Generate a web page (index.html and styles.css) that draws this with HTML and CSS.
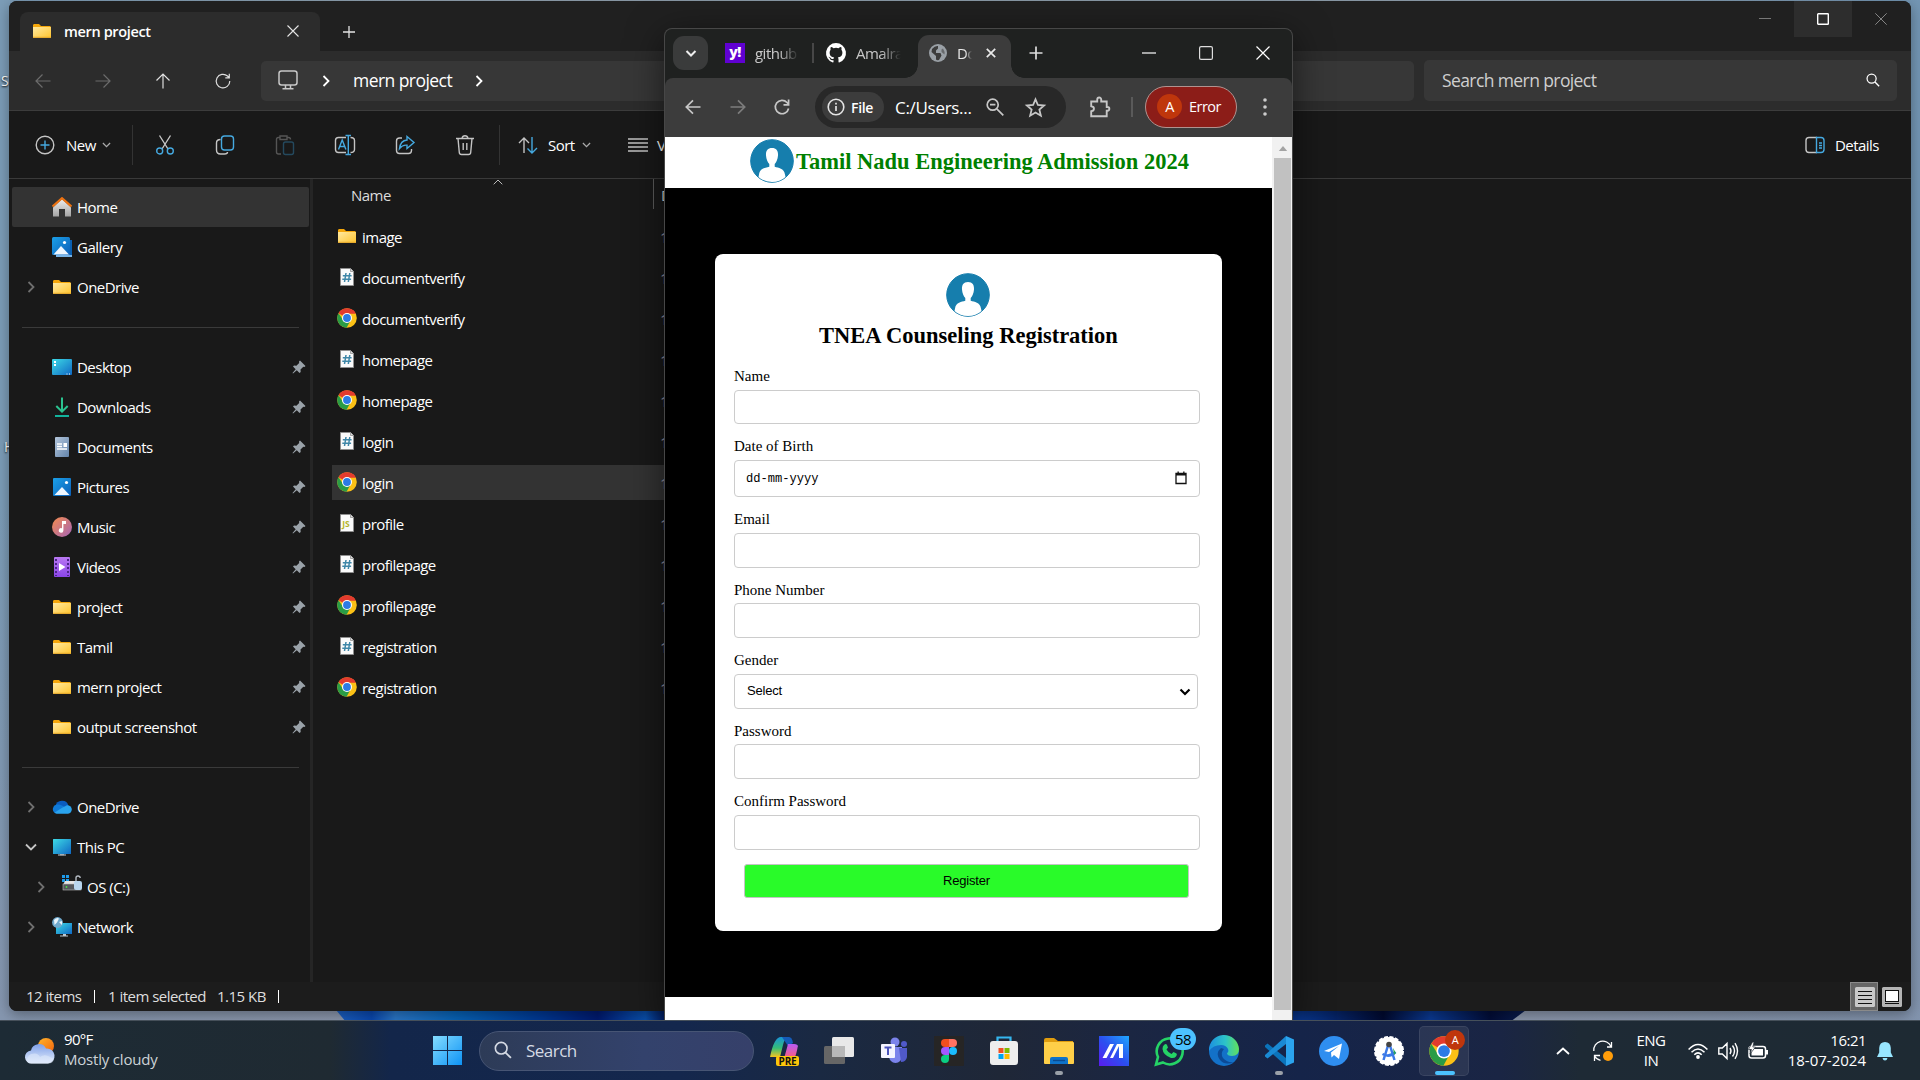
FILE: index.html
```html
<!DOCTYPE html>
<html lang="en">
<head>
<meta charset="utf-8">
<title>Desktop</title>
<link rel="stylesheet" href="styles.css">
</head>
<body>
<svg class="defs" width="0" height="0" aria-hidden="true">
<defs>
<linearGradient id="gFolder" x1="0" y1="0" x2="1" y2="1"><stop offset="0" stop-color="#ffe9a0"/><stop offset="1" stop-color="#ffc42e"/></linearGradient>
<linearGradient id="gBlue" x1="0" y1="0" x2="1" y2="1"><stop offset="0" stop-color="#1ba0e8"/><stop offset="1" stop-color="#0c5fb8"/></linearGradient>
<linearGradient id="gCyan" x1="0" y1="0" x2="1" y2="1"><stop offset="0" stop-color="#3ddbe6"/><stop offset="1" stop-color="#1068c4"/></linearGradient>
<linearGradient id="gMusic" x1="0" y1="0" x2="1" y2="1"><stop offset="0" stop-color="#f58b4c"/><stop offset="1" stop-color="#a565b8"/></linearGradient>
<linearGradient id="gDoc" x1="0" y1="0" x2="1" y2="1"><stop offset="0" stop-color="#b4c6dc"/><stop offset="1" stop-color="#6384ab"/></linearGradient>
<linearGradient id="gHouse" x1="0" y1="0" x2="0" y2="1"><stop offset="0" stop-color="#eee"/><stop offset="1" stop-color="#a4a4a4"/></linearGradient>
<linearGradient id="gVideo" x1="0" y1="0" x2="0" y2="1"><stop offset="0" stop-color="#b978f2"/><stop offset="1" stop-color="#8a45e8"/></linearGradient>
<linearGradient id="gWin" x1="0" y1="0" x2="1" y2="1"><stop offset="0" stop-color="#84dcff"/><stop offset="1" stop-color="#0e93f5"/></linearGradient>
<linearGradient id="gCloud" x1="0" y1="0" x2="0" y2="1"><stop offset="0" stop-color="#7fa0e8"/><stop offset="1" stop-color="#e6effc"/></linearGradient>
<linearGradient id="gSun" x1="0" y1="0" x2="1" y2="1"><stop offset="0" stop-color="#ffb52c"/><stop offset="1" stop-color="#f2620c"/></linearGradient>
<linearGradient id="gEdge" x1="0" y1="0" x2="1" y2="0"><stop offset="0" stop-color="#1d90e0"/><stop offset=".55" stop-color="#2cc3c8"/><stop offset="1" stop-color="#62e05a"/></linearGradient>
<linearGradient id="gM" x1="0" y1="1" x2="1" y2="0"><stop offset="0" stop-color="#5a1bf0"/><stop offset=".5" stop-color="#2b50f0"/><stop offset="1" stop-color="#1fa8ff"/></linearGradient>
<linearGradient id="gCopA" x1="0" y1="0" x2="0" y2="1"><stop offset="0" stop-color="#1893d8"/><stop offset=".55" stop-color="#35bd77"/><stop offset="1" stop-color="#f4c522"/></linearGradient>
<linearGradient id="gCopB" x1="0" y1="0" x2="0" y2="1"><stop offset="0" stop-color="#b75bf5"/><stop offset=".6" stop-color="#f25c8e"/><stop offset="1" stop-color="#f9914a"/></linearGradient>

<symbol id="i-folder" viewBox="0 0 20 20"><path d="M1 4.5Q1 3 2 3h5l2 2h9.5v3H1z" fill="#f5a70b"/><path d="M1 6h18v11H1z" fill="url(#gFolder)"/><path d="M1 16.3h18" stroke="#e0a32a" stroke-width="1"/></symbol>
<symbol id="i-home" viewBox="0 0 20 20"><path d="M1 10.5 10 2l9 8.500V19.500H13V12H7v7.500H1z" fill="url(#gHouse)"/><path d="M.5 9.500 10 1.200l9.500 8.300" fill="none" stroke="#ec7211" stroke-width="2.200"/></symbol>
<symbol id="i-gallery" viewBox="0 0 20 20"><path d="M4 4h16v16H4z" fill="#78b4e8"/><path d="M17.500 3H20v15h-2.500z" fill="#0a5fb0"/><rect width="18" height="18" rx="1.500" fill="url(#gBlue)"/><path d="M1.500 17.500 9 9l8 8.500z" fill="#eef6ff"/><circle cx="12.500" cy="5.500" r="1.600" fill="#fff"/></symbol>
<symbol id="i-pictures" viewBox="0 0 20 20"><rect x="1" y="1" width="18" height="18" rx="1" fill="url(#gBlue)"/><path d="M2.500 18 10 10l7.500 8z" fill="#eef6ff"/><circle cx="14.500" cy="5.500" r="1.600" fill="#fff"/></symbol>
<symbol id="i-desktop" viewBox="0 0 20 20"><rect y="2" width="20" height="16" rx="1" fill="url(#gCyan)"/><path d="M2 4h2v2H2zM2 7h2v2H2z" fill="#fff"/><path d="M14.500 16.500h1v1h-1zM17 16.500h1v1h-1z" fill="#fff"/></symbol>
<symbol id="i-download" viewBox="0 0 20 20"><path d="M10 .5V14M4.300 9 10 14.700 15.700 9" fill="none" stroke="#2bc390" stroke-width="2"/><path d="M3 18h14v2H3z" fill="#12b39c"/></symbol>
<symbol id="i-doc" viewBox="0 0 20 20"><rect x="3" width="14" height="20" rx="1" fill="url(#gDoc)"/><path d="M5 7h5M5 9.500h5M5 12h10" stroke="#fff" stroke-width="1.300"/><path d="M11.500 6H15v4h-3.500z" fill="#fff"/></symbol>
<symbol id="i-music" viewBox="0 0 20 20"><circle cx="10" cy="10" r="10" fill="url(#gMusic)"/><path d="M10 4h4v3h-2.600v6.500a2.300 2.300 0 1 1-1.400-2.200z" fill="#fff"/></symbol>
<symbol id="i-video" viewBox="0 0 20 20"><rect x="2" width="16" height="20" rx="1" fill="url(#gVideo)"/><path d="M4 2v17M16 2v17" stroke="#4b2488" stroke-width="2" stroke-dasharray="2 2"/><path d="M7 6v8l6.500-4z" fill="#fff"/></symbol>
<symbol id="i-cloud" viewBox="0 0 20 20"><path d="M3.500 9.500A6.600 6.600 0 0 1 16.500 9L9 14z" fill="#0a5cc0"/><path d="M4.500 7.600A4.600 4.600 0 0 0 3 16L16 12.500Q9 6.500 4.500 7.600z" fill="#0f7ad8"/><path d="M2.300 15.800Q9 11 15 8.300A4.200 4.200 0 0 1 16 16.800H4.500z" fill="#2aa3ee"/></symbol>
<symbol id="i-pc" viewBox="0 0 20 20"><rect x="1" y="2" width="18" height="15" rx=".6" fill="url(#gCyan)"/><path d="M8 17h4v1.200H8z" fill="#888"/><path d="M6 18h8" stroke="#c8d0d6" stroke-width="1.200"/></symbol>
<symbol id="i-drive" viewBox="0 0 20 20"><path d="M0 0h3v3H0zM4 0h3v3H4zM0 4h3v3H0zM4 4h3v3H4z" fill="#1e9bea"/><path d="M3 6h12l2 4H1z" fill="#e4e4e4"/><rect x="1" y="9" width="18" height="6" fill="#55585c" stroke="#bbb" stroke-width=".6"/><circle cx="4.500" cy="12" r=".9" fill="#4be04b"/><path d="M14 6V3q0-2 2-2t2.200 2" fill="none" stroke="#b5bcc4" stroke-width="1.400"/><rect x="12" y="6" width="8" height="9" rx="2" fill="#b9d6ee"/></symbol>
<symbol id="i-network" viewBox="0 0 20 20"><rect x="4" y="6" width="16" height="11" fill="url(#gCyan)"/><path d="M11 17h3v2h-3zM8 18.500h8v1H8z" fill="#bcc6ce"/><circle cx="5.500" cy="5.500" r="5.400" fill="#6fa9cd"/><path d="M2 3q3-3 5-1.500L5 5.500 2.500 8zM7 5l3-1v4z" fill="#e9f4fa"/></symbol>
<symbol id="i-pin" viewBox="0 0 14 14"><path d="M8 .5 13.500 6l-1 1-1.200-.2-2.800 2.800.2 2.400-1.200 1L4.800 10.300 1 13.500.5 13l3.200-3.800L1 6.500l1-1 2.400.2 2.800-2.800L7 1.500z" fill="#9aa2a9"/></symbol>
<symbol id="i-chev" viewBox="0 0 12 12"><path d="M3.500 1 8.500 6l-5 5" fill="none" stroke="currentColor" stroke-width="1.800"/></symbol>
<symbol id="i-css" viewBox="0 0 20 20"><path d="M3.500 1.500h10l3 3v14h-13z" fill="#fafafa" stroke="#8f8f8f"/><path d="M13.500 1.500v3h3" fill="#ddd" stroke="#8f8f8f" stroke-width=".8"/><path d="M9 6 7.500 15M12.800 6l-1.500 9M5.800 8.800h8.800M5.300 12.200h8.800" stroke="#3f87a8" stroke-width="1.500"/></symbol>
<symbol id="i-js" viewBox="0 0 20 20"><path d="M3.500 1.500h10l3 3v14h-13z" fill="#fafafa" stroke="#8f8f8f"/><path d="M13.500 1.500v3h3" fill="#ddd" stroke="#8f8f8f" stroke-width=".8"/><text x="5.300" y="14.200" class="jsmark">JS</text></symbol>
<symbol id="i-chrome" viewBox="0 0 48 48"><circle cx="24" cy="24" r="23.500" fill="#fbc116"/><path d="M24 24 3.600 12.300A23.500 23.500 0 0 1 44.400 12.300L46 14H24z" fill="#e33b2e"/><path d="M24 24 33 29 23 47.500A23.500 23.500 0 0 1 3.600 12.300L14.500 29z" fill="#2a9c46"/><path d="M24 12h20.300q-3.500-6-6.300-8L24 10z" fill="#e33b2e"/><circle cx="24" cy="24" r="12" fill="#fff"/><circle cx="24" cy="24" r="9.400" fill="#2c7be5"/></symbol>
<symbol id="i-avatar" viewBox="0 0 44 44"><circle cx="22" cy="22" r="21.300" fill="#167ead" stroke="#167ead"/><path d="M22 9c4.500 0 6.300 2.900 6 7.500-.2 4-2 7-3.300 8.600v2.700c3.800 1.400 9.300 1 10.300 7.800l.5 2.400Q30 43 22 43T8.500 38l.5-2.400c1-6.800 6.500-6.400 10.300-7.800v-2.700C18 23.500 16.200 20.500 16 16.500c-.3-4.600 1.500-7.500 6-7.500z" fill="#fff"/></symbol>
<symbol id="i-lens" viewBox="0 0 20 20"><circle cx="8" cy="8" r="6.500" fill="none" stroke="currentColor" stroke-width="1.800"/><path d="m12.800 12.800 6 6" stroke="currentColor" stroke-width="2"/></symbol>
</defs>
</svg>

<main class="desktop">
<svg class="bloom" viewBox="0 0 1190 12" preserveAspectRatio="none"><defs><linearGradient id="gBloom"><stop offset="0" stop-color="#1c62c4"/><stop offset=".03" stop-color="#0a48b0"/><stop offset=".05" stop-color="#2a77c8"/><stop offset=".1" stop-color="#0864b8"/><stop offset=".17" stop-color="#003a96"/><stop offset=".22" stop-color="#001a70"/><stop offset=".26" stop-color="#0b55b8"/><stop offset=".28" stop-color="#001660"/><stop offset=".81" stop-color="#0a3c9c"/><stop offset=".88" stop-color="#010a30"/><stop offset=".92" stop-color="#0b3a94"/><stop offset=".97" stop-color="#020d38"/><stop offset="1" stop-color="#0a1e50"/></linearGradient></defs><path d="M0 0h1190l-16 12H10z" fill="url(#gBloom)"/></svg>
<span class="desk-label desk-a">S</span><span class="desk-label desk-b">H</span>

<section class="explorer">
  <header class="ex-title">
    <div class="ex-tab"><svg class="ic20"><use href="#i-folder"/></svg><b>mern project</b><svg class="x12" viewBox="0 0 12 12"><path d="m.5.5 11 11M11.500.5l-11 11" stroke="#e4e4e4" stroke-width="1.100"/></svg></div>
    <svg class="ex-plus" viewBox="0 0 12 12"><path d="M6 0v12M0 6h12" stroke="#e4e4e4" stroke-width="1.300"/></svg>
    <div class="ex-ctl">
      <span><svg viewBox="0 0 12 12"><path d="M0 5.500h12" stroke="#777"/></svg></span>
      <span class="hot"><svg viewBox="0 0 12 12"><rect x=".7" y=".7" width="10.600" height="10.600" rx=".6" fill="none" stroke="#fff" stroke-width="1.400"/></svg></span>
      <span><svg viewBox="0 0 12 12"><path d="m.3.3 11.400 11.400M11.700.3.3 11.700" stroke="#868686"/></svg></span>
    </div>
  </header>
  <nav class="ex-nav">
    <svg class="nav-i dim" viewBox="0 0 16 16"><path d="M15.500 8H1M7.500 1.500 1 8l6.500 6.500"/></svg>
    <svg class="nav-i dim" viewBox="0 0 16 16"><path d="M.5 8H15M8.500 1.500 15 8l-6.500 6.500"/></svg>
    <svg class="nav-i" viewBox="0 0 16 16"><path d="M8 15.500V1M1.500 7.500 8 1l6.500 6.500"/></svg>
    <svg class="nav-i" viewBox="0 0 16 16"><path d="M14.800 8A6.800 6.800 0 1 1 12.500 3L14 4.500M14.300.8v4H10.300"/></svg>
    <div class="address">
      <svg class="ic20 mon" viewBox="0 0 20 20"><rect x="1" y="1" width="18" height="14" rx="2.500"/><path d="M7.500 15v3.500M12.500 15v3.500M4.500 18.700h11"/></svg>
      <svg class="ch12"><use href="#i-chev"/></svg><span>mern project</span><svg class="ch12"><use href="#i-chev"/></svg>
    </div>
    <div class="ex-search"><span>Search mern project</span><svg><use href="#i-lens"/></svg></div>
  </nav>
  <div class="ex-cmd">
    <svg class="c-new" viewBox="0 0 20 20"><circle cx="10" cy="10" r="8.800"/><path class="bl" d="M10 5.500v9M5.500 10h9"/></svg><span class="t-new">New</span><svg class="dn" viewBox="0 0 10 6"><path d="m1 .8 4 4 4-4"/></svg>
    <i class="bar"></i>
    <div class="tools">
      <svg viewBox="0 0 20 20"><path d="m4.500.500 8.500 13.500M15.500.500 7 14"/><g class="bl"><circle cx="4.700" cy="16" r="3"/><circle cx="15.300" cy="16" r="3"/></g></svg>
      <svg viewBox="0 0 20 20"><path d="M5.500 4.500Q1.500 4.500 1.500 8v7q0 4 4 4h4q3 0 3-2"/><rect class="bl" x="6.500" y="1" width="12" height="14" rx="3"/></svg>
      <svg class="faint" viewBox="0 0 20 20"><path d="M5 2.500H3.500q-2 0-2 2V17q0 2 2 2H6M12 2.500h1.500q2 0 2 2M5 1h7v3.500H5z"/><rect class="bl" x="8.500" y="7" width="10" height="12.500" rx="2"/></svg>
      <svg viewBox="0 0 20 20"><path d="M11 2.500H3.500q-3 0-3 3v9q0 3 3 3H11M15.500 2.500q4 0 4 3v9q0 3-4 3"/><path class="bl" d="m3.500 14.500 3.700-9.500 3.700 9.500M5 11.500h4.500M13.300.5v19M10.500.5h5.500M10.500 19.500h5.500"/></svg>
      <svg viewBox="0 0 20 20"><path d="M7 3H4.500q-3 0-3 3v9.500q0 3 3 3h9q3 0 3-3V14"/><path class="bl" d="M12 1.500 19 7.500l-7 6v-3.300q-4.500-.5-7.500 3.300Q5.500 5.500 12 5z"/></svg>
      <svg viewBox="0 0 20 20"><path d="M1 3.500h18M7 3.300Q7.500.8 10 .8t3 2.500M3 3.500l1.300 14q.2 2 2.200 2h7q2 0 2.200-2L17 3.500M8.200 8v7M11.800 8v7"/></svg>
    </div>
    <i class="bar"></i>
    <svg class="c-sort" viewBox="0 0 20 20"><path d="M6 18V3M1 8l5-5 5 5"/><path class="bl" d="M14 2v16M9.500 13.500 14 18l5-5"/></svg><span class="t-sort">Sort</span><svg class="dn" viewBox="0 0 10 6"><path d="m1 .8 4 4 4-4"/></svg>
    <svg class="c-view" viewBox="0 0 20 20"><path d="M0 4h20M0 8h20M0 12h20M0 16h20"/></svg><span class="t-view">V</span>
    <div class="details"><svg viewBox="0 0 20 20"><path d="M12 2.500H4q-3 0-3 3v9q0 3 3 3h8"/><path class="bl" d="M11.500 2.500H16q3 0 3 3v9q0 3-3 3h-4.500zM14 8h3M14 10.500h3M14 13h3"/></svg><span>Details</span></div>
  </div>
  <div class="ex-body">
    <aside class="side">
      <div class="row sel"><i></i><svg class="ic20"><use href="#i-home"/></svg>Home</div>
      <div class="row"><i></i><svg class="ic20"><use href="#i-gallery"/></svg>Gallery</div>
      <div class="row"><i><svg class="ch12"><use href="#i-chev"/></svg></i><svg class="ic20"><use href="#i-folder"/></svg>OneDrive</div>
      <hr>
      <div class="row"><i></i><svg class="ic20"><use href="#i-desktop"/></svg>Desktop<svg class="pin"><use href="#i-pin"/></svg></div>
      <div class="row"><i></i><svg class="ic20"><use href="#i-download"/></svg>Downloads<svg class="pin"><use href="#i-pin"/></svg></div>
      <div class="row"><i></i><svg class="ic20"><use href="#i-doc"/></svg>Documents<svg class="pin"><use href="#i-pin"/></svg></div>
      <div class="row"><i></i><svg class="ic20"><use href="#i-pictures"/></svg>Pictures<svg class="pin"><use href="#i-pin"/></svg></div>
      <div class="row"><i></i><svg class="ic20"><use href="#i-music"/></svg>Music<svg class="pin"><use href="#i-pin"/></svg></div>
      <div class="row"><i></i><svg class="ic20"><use href="#i-video"/></svg>Videos<svg class="pin"><use href="#i-pin"/></svg></div>
      <div class="row"><i></i><svg class="ic20"><use href="#i-folder"/></svg>project<svg class="pin"><use href="#i-pin"/></svg></div>
      <div class="row"><i></i><svg class="ic20"><use href="#i-folder"/></svg>Tamil<svg class="pin"><use href="#i-pin"/></svg></div>
      <div class="row"><i></i><svg class="ic20"><use href="#i-folder"/></svg>mern project<svg class="pin"><use href="#i-pin"/></svg></div>
      <div class="row"><i></i><svg class="ic20"><use href="#i-folder"/></svg>output screenshot<svg class="pin"><use href="#i-pin"/></svg></div>
      <hr>
      <div class="row"><i><svg class="ch12"><use href="#i-chev"/></svg></i><svg class="ic20"><use href="#i-cloud"/></svg>OneDrive</div>
      <div class="row"><i class="open"><svg class="ch12"><use href="#i-chev"/></svg></i><svg class="ic20"><use href="#i-pc"/></svg>This PC</div>
      <div class="row sub"><i><svg class="ch12"><use href="#i-chev"/></svg></i><svg class="ic20 up"><use href="#i-drive"/></svg>OS (C:)</div>
      <div class="row"><i><svg class="ch12"><use href="#i-chev"/></svg></i><svg class="ic20"><use href="#i-network"/></svg>Network</div>
    </aside>
    <div class="files">
      <div class="f-head"><div class="f-name">Name<svg class="caret" viewBox="0 0 10 6"><path d="m.7 5.300 4.300-4.300 4.300 4.300" fill="none" stroke="#bbb"/></svg></div><span>D</span></div>
      <div class="f-row"><svg class="ic20"><use href="#i-folder"/></svg><span>image</span><em>1</em></div>
      <div class="f-row"><svg class="ic20"><use href="#i-css"/></svg><span>documentverify</span><em>1</em></div>
      <div class="f-row"><svg class="ic20"><use href="#i-chrome"/></svg><span>documentverify</span><em>1</em></div>
      <div class="f-row"><svg class="ic20"><use href="#i-css"/></svg><span>homepage</span><em>1</em></div>
      <div class="f-row"><svg class="ic20"><use href="#i-chrome"/></svg><span>homepage</span><em>1</em></div>
      <div class="f-row"><svg class="ic20"><use href="#i-css"/></svg><span>login</span><em>1</em></div>
      <div class="f-row on"><svg class="ic20"><use href="#i-chrome"/></svg><span>login</span><em>1</em></div>
      <div class="f-row"><svg class="ic20"><use href="#i-js"/></svg><span>profile</span><em>1</em></div>
      <div class="f-row"><svg class="ic20"><use href="#i-css"/></svg><span>profilepage</span><em>1</em></div>
      <div class="f-row"><svg class="ic20"><use href="#i-chrome"/></svg><span>profilepage</span><em>1</em></div>
      <div class="f-row"><svg class="ic20"><use href="#i-css"/></svg><span>registration</span><em>1</em></div>
      <div class="f-row"><svg class="ic20"><use href="#i-chrome"/></svg><span>registration</span><em>1</em></div>
    </div>
  </div>
  <footer class="ex-status">
    <span class="s1">12 items</span><i></i><span class="s2">1 item selected</span><span class="s3">1.15 KB</span><i></i>
    <div class="modes"><span class="m-on"><svg viewBox="0 0 20 20"><rect width="20" height="20" rx="1.500" fill="#c9c9c9"/><path d="M3 4.500h14M3 8.500h14M3 12.500h14M3 16.500h14" stroke="#111"/></svg></span><svg viewBox="0 0 20 20"><rect width="20" height="20" rx="1.500" fill="#b5b5b5"/><rect x="3.500" y="3.500" width="13" height="11" fill="#fff" stroke="#111"/><path d="M3 16.500h14" stroke="#111"/></svg></div>
  </footer>
</section>

<section class="chrome">
  <header class="strip">
    <span class="drop"><svg viewBox="0 0 12 12"><path d="m1.500 4 4.500 4.500L10.500 4" fill="none" stroke="#eee" stroke-width="2"/></svg></span>
    <div class="tab t1"><span class="yahoo">y!</span><span class="fade w44">github</span></div>
    <i class="tdiv"></i>
    <div class="tab t2"><svg class="ic20" viewBox="0 0 16 16"><path fill="#fff" d="M8 0a8 8 0 0 0-2.530 15.590c.4.070.55-.17.55-.38v-1.500c-2.230.5-2.700-.95-2.700-.95-.36-.92-.89-1.170-.89-1.170-.73-.5.060-.49.060-.49.800.060 1.230.83 1.230.83.710 1.220 1.870.87 2.330.66.070-.52.280-.87.500-1.070-1.780-.2-3.640-.89-3.640-3.950 0-.87.310-1.590.820-2.150-.080-.2-.36-1.020.080-2.120 0 0 .67-.21 2.200.82a7.600 7.600 0 0 1 4 0c1.530-1.040 2.200-.82 2.200-.82.440 1.100.160 1.920.080 2.120.510.560.820 1.270.820 2.150 0 3.070-1.870 3.750-3.650 3.950.290.250.540.730.540 1.480v2.200c0 .210.150.460.550.380A8 8 0 0 0 8 0z"/></svg><span class="fade w45">Amalra</span></div>
    <div class="tab active"><svg class="globe" viewBox="0 0 18 18"><circle cx="9" cy="9" r="9" fill="#9aa0a6"/><path d="M3 5q3-3.500 6-3v2.500L7 6.500V9h4.500l1 2.500L10 16q-2 .5-3-.5V12L2.500 8z" fill="#3c3c3c"/><path d="M14 4.500q2 3 1.500 6L12.500 8V5.500z" fill="#3c3c3c" opacity=".55"/></svg><span class="fade w15">Do</span><svg class="tx" viewBox="0 0 10 10"><path d="m.8.8 8.400 8.400M9.200.8.800 9.200" stroke="#e8e8e8" stroke-width="1.700"/></svg></div>
    <svg class="plus" viewBox="0 0 14 14"><path d="M7 .5v13M.5 7h13" stroke="#ddd" stroke-width="1.700"/></svg>
    <div class="ctl"><svg viewBox="0 0 14 14"><path d="M0 7h14" stroke="#fff" stroke-width="1.200"/></svg><svg viewBox="0 0 14 14"><rect x=".6" y=".6" width="12.800" height="12.800" rx="1.500" fill="none" stroke="#ddd" stroke-width="1.200"/></svg><svg viewBox="0 0 14 14"><path d="m.5.5 13 13M13.500.5l-13 13" stroke="#fff" stroke-width="1.200"/></svg></div>
  </header>
  <nav class="tbar">
    <svg class="b" viewBox="0 0 16 16"><path d="M15.500 8H1.500M8 1.300 1.300 8 8 14.700"/></svg>
    <svg class="b off" viewBox="0 0 16 16"><path d="M.5 8h14M8 1.300 14.700 8 8 14.700"/></svg>
    <svg class="b" viewBox="0 0 16 16"><path d="M14.600 9.500A6.700 6.700 0 1 1 13 3.500l1.300 1.500M14.600.5v5.300H9.500"/></svg>
    <div class="omni">
      <span class="chip"><svg viewBox="0 0 18 18"><circle cx="9" cy="9" r="7.800" fill="none" stroke="#e3e3e3" stroke-width="1.600"/><path d="M9 8v5M9 4.800v1.700" stroke="#e3e3e3" stroke-width="1.700"/></svg>File</span>
      <span class="url">C:/Users...</span>
      <svg class="o1" viewBox="0 0 18 18"><circle cx="6.700" cy="6.700" r="5.500"/><path d="m10.800 10.800 6.500 6.500M4 6.700h5.400"/></svg>
      <svg class="o2" viewBox="0 0 20 20"><path d="m10 2.200 2.300 5.400 5.900.5-4.500 3.900 1.400 5.800L10 14.700l-5.100 3.100L6.300 12 1.800 8.100l5.900-.5z"/></svg>
    </div>
    <svg class="ext" viewBox="0 0 20 20"><path d="M2 5h5.500V3.200a1.800 1.800 0 0 1 3.600 0V5h5v5h.7a1.700 1.700 0 0 1 0 3.400h-.7v5H2v-4.500q2.500-.3 2.500-2.300T2 9.300z"/></svg>
    <i class="vdiv"></i>
    <div class="error"><b>A</b>Error</div>
    <svg class="dots" viewBox="0 0 4 18"><g fill="#ccc"><circle cx="2" cy="2" r="1.800"/><circle cx="2" cy="9" r="1.800"/><circle cx="2" cy="16" r="1.800"/></g></svg>
  </nav>
  <div class="view">
    <div class="page">
      <div class="banner"><svg class="ava"><use href="#i-avatar"/></svg><h1>Tamil Nadu Engineering Admission 2024</h1></div>
      <div class="dark">
        <form class="card">
          <svg class="ava"><use href="#i-avatar"/></svg>
          <h2>TNEA Counseling Registration</h2>
          <label>Name</label><div class="in h34"></div>
          <label>Date of Birth</label><div class="in date">dd-mm-yyyy<svg viewBox="0 0 12 14"><path d="M1 2.500h10v10H1z" fill="none" stroke="#111" stroke-width="1.300"/><path d="M1 2h10v2.500H1zM2.500.5h1.300V3H2.500zM8.200.5h1.300V3H8.200z" fill="#111"/></svg></div>
          <label>Email</label><div class="in"></div>
          <label class="tight">Phone Number</label><div class="in"></div>
          <label>Gender</label><div class="in pick">Select<svg viewBox="0 0 12 8"><path d="m1.500 1.500 4.500 4.500 4.500-4.500" fill="none" stroke="#000" stroke-width="2.200"/></svg></div>
          <label class="tight">Password</label><div class="in"></div>
          <label>Confirm Password</label><div class="in"></div>
          <div class="go">Register</div>
        </form>
      </div>
    </div>
    <div class="scroll"><svg viewBox="0 0 10 6"><path d="M5 0 10 6H0z" fill="#a3a3a3"/></svg><i></i></div>
  </div>
</section>

<footer class="taskbar">
  <div class="weather"><svg viewBox="0 0 30 26"><circle cx="21" cy="8" r="8" fill="url(#gSun)"/><path d="M7 25.500a6.500 6.500 0 0 1-1-13A8 8 0 0 1 21 10.500a7.500 7.500 0 0 1 2 15z" fill="url(#gCloud)"/><path d="M3 25a6.500 6.500 0 0 1 3-9q7-2 9 3 4-3 8-1t6 3q-1 4.500-6 4.500H6z" fill="#dce7fa" opacity=".6"/></svg><div><p class="deg">90°F</p><p class="gr">Mostly cloudy</p></div></div>
  <svg class="start" viewBox="0 0 29 29"><path d="M0 0h14v14H0zM15 0h14v14H15zM0 15h14v14H0zM15 15h14v14H15z" fill="url(#gWin)"/></svg>
  <div class="pill"><svg><use href="#i-lens"/></svg>Search</div>
  <div class="apps">
    <div class="app"><svg viewBox="0 0 30 30"><path d="M1 21Q5 1 12 1h8q-4 0-6 8l-3 12z" fill="url(#gCopA)"/><path d="M13 1h7q3 0 4 6l-5 3z" fill="#155bb8"/><path d="M29 9Q26 29 18 28h-8q4-1 6-9l3-11h6q4 0 4 3z" fill="url(#gCopB)"/></svg><span class="pre">PRE</span></div>
    <div class="app"><svg viewBox="0 0 30 30"><rect y="10" width="21" height="18" rx="1.500" fill="#666"/><rect x="8" y="1" width="22" height="20" rx="1.500" fill="#e8e8e8"/><path d="M8 10h13v11H8z" fill="#b8b8b8"/></svg></div>
    <div class="app"><svg viewBox="0 0 30 30"><circle cx="16" cy="6" r="4.500" fill="#7b83eb"/><circle cx="25" cy="8" r="3" fill="#5059c9"/><path d="M10 11h13v9a6.500 7 0 0 1-13 0z" fill="#7b83eb"/><path d="M20 12h8v9q-1 5-6 5z" fill="#5059c9"/><rect x="2" y="8" width="14" height="14" rx="1" fill="#f4f4ff"/><path d="M5.500 11.500h7M9 11.500V19" stroke="#4b53bc" stroke-width="2"/></svg></div>
    <div class="app"><svg viewBox="0 0 30 30"><rect width="30" height="30" rx="1" fill="#262525"/><path d="M15 3h-4a4 4 0 0 0 0 8h4z" fill="#f24e1e"/><path d="M15 3h4a4 4 0 0 1 0 8h-4z" fill="#ff7262"/><path d="M15 11h-4a4 4 0 0 0 0 8h4z" fill="#a259ff"/><circle cx="19" cy="15" r="4" fill="#1abcfe"/><path d="M15 19h-4a4 4 0 1 0 4 4z" fill="#0acf83"/></svg></div>
    <div class="app"><svg viewBox="0 0 30 30"><path d="M8.500 6V1.500h13V6" fill="none" stroke="#35b6ee" stroke-width="2.200"/><rect x="1" y="5" width="28" height="24" rx="3" fill="#eee"/><path d="M9.500 12h5v5h-5z" fill="#f25022"/><path d="M15.500 12h5v5h-5z" fill="#7fba00"/><path d="M9.500 18h5v5h-5z" fill="#00a4ef"/><path d="M15.500 18h5v5h-5z" fill="#ffb900"/></svg></div>
    <div class="app run"><svg viewBox="0 0 30 30"><path d="M0 4q0-2 2-2h8l4 3h15v8H0z" fill="#e09c0e"/><rect y="6" width="30" height="22" rx="1" fill="#ffcf48"/><path d="M6 28v-5q0-2 2-2h14q2 0 2 2v5z" fill="#0f73c9"/><path d="M9 24.500h12" stroke="#0a4a90" stroke-width="1.400"/></svg></div>
    <div class="app"><svg viewBox="0 0 30 30"><rect width="30" height="30" fill="url(#gM)"/><path d="M3.500 22 11 8h4L7.500 22zM11 22l7-14h3l-7 14zM20 8h4v14h-4z" fill="#fff"/></svg></div>
    <div class="app"><svg viewBox="0 0 30 30"><path d="M2 28.500 4 21A13 13 0 1 1 9 26.500z" fill="none" stroke="#25d366" stroke-width="2.600"/><path d="M10 9q2-2 3 0l1 2.500-1.500 2q2 3.500 5 4.500l2-2 3 1.500q1 1-.5 3t-5 1.500Q9 19 8.500 13 8.500 10 10 9z" fill="#25d366"/></svg><span class="badge">58</span></div>
    <div class="app"><svg viewBox="0 0 30 30"><circle cx="15" cy="15" r="15" fill="#1371c8"/><path d="M0 15A15 15 0 0 1 30 13q0 7-7 7-5 0-5-3 2-1 1-4-2-4-7-4Q4 9 0 15z" fill="url(#gEdge)"/><path d="M12 12q-6 5-1 12 5 6 14 2-7 1-11-4-3-5 1-9z" fill="#0c4a96"/></svg></div>
    <div class="app run"><svg viewBox="0 0 30 30"><path d="M1 9.500 3.500 7.500 22 22V30L1 11z" fill="#0b73ba"/><path d="M1 20.500 3.500 22.500 22 8V0L1 19z" fill="#1a8ad4"/><path d="m22 0 8 3.500v23L22 30z" fill="#2ba4ee"/></svg></div>
    <div class="app"><svg viewBox="0 0 30 30"><circle cx="15" cy="15" r="15" fill="#2f8ef0"/><path d="m5 15 18-7.500-3 15.500-5-4-2.500 2.500-.5-5 8-6.500-10 6z" fill="#fff"/></svg></div>
    <div class="app"><svg viewBox="0 0 30 30"><circle cx="15" cy="15" r="14" fill="#fff" stroke="#fff" stroke-width="2" stroke-dasharray="4 1.500"/><path d="m14.500 8-5 16M15.500 8l5 16M8.500 18q7 4 13-2" fill="none" stroke="#3b79e8" stroke-width="2.500"/><circle cx="15" cy="8.500" r="2.800" fill="#444"/><path d="m19 12 3 5-2 2z" fill="#2ba35a"/></svg></div>
    <div class="app live"><svg viewBox="0 0 48 48"><use href="#i-chrome"/></svg><span class="ab">A</span></div>
  </div>
  <div class="tray">
    <svg class="y1" viewBox="0 0 14 8"><path d="m1 7 6-5.500L13 7" fill="none" stroke="#fff" stroke-width="1.800"/></svg>
    <svg class="y2" viewBox="0 0 20 20"><path d="M.8 10A9 9 0 0 1 18 5.500M18.500 1v5H14M1.500 20v-5.500H7M1.500 15q2 3.500 6 4.300" fill="none" stroke="#fff" stroke-width="1.300"/><circle cx="15" cy="15" r="5" fill="#ff9d0a"/></svg>
    <div class="lang"><p>ENG</p><p>IN</p></div>
    <svg class="y3" viewBox="0 0 20 16"><g fill="none" stroke="#fff" stroke-width="1.500"><path d="M.6 6.500q9.400-10 18.800 0M3.500 9.200q6.500-6.600 13 0M6.300 11.700q3.700-3.600 7.400 0"/></g><circle cx="10" cy="14" r="1.900" fill="#fff"/></svg>
    <svg class="y4" viewBox="0 0 20 18"><g fill="none" stroke="#fff" stroke-width="1.400"><path d="M.8 6h3.500L9 1.500v15L4.300 12H.8zM12 6q2 3 0 6M14.500 3.500q4 5.500 0 11M17 1.200q5 7.800 0 15.600"/></g></svg>
    <svg class="y5" viewBox="0 0 20 18"><rect x="1" y="4.500" width="16.500" height="11.500" rx="2.500" fill="none" stroke="#fff" stroke-width="1.500"/><rect x="3.500" y="7" width="11.500" height="6.500" fill="#fff"/><path d="M18 8h2v4.500h-2z" fill="#fff"/><path d="M4.500 0 .5 7.500h3L2 12l5.500-7H4.800L6 0z" fill="#fff" stroke="#1f2a33" stroke-width=".7"/></svg>
    <div class="clock"><p>16:21</p><p class="day">18-07-2024</p></div>
    <svg class="y6" viewBox="0 0 16 20"><path d="M8 1q5.500 0 5.800 6v4.500L16 16H0l2.200-4.500V7Q2.500 1 8 1z" fill="#98e6ff"/><path d="M5.500 17h5q-.5 2.500-2.500 2.500T5.500 17z" fill="#98e6ff"/></svg>
  </div>
</footer>
</main>
</body>
</html>
```
FILE: styles.css
```css
* { box-sizing: border-box; }
body { margin: 0; overflow: hidden; font-family: "Open Sans", "Noto Sans", sans-serif; font-size: 15px; letter-spacing: -0.52px; color: #fff; }
p, h1, h2 { margin: 0; }
svg { display: block; flex: none; overflow: visible; }
.defs { position: absolute; }
.desktop { position: relative; width: 1920px; height: 1080px; overflow: hidden; background: linear-gradient(90deg, #7c9db8 0, #93a4b2 400px, #93a4b2 1500px, #7396b4 1920px); }
.desktop::before { content: ""; position: absolute; inset: 500px 0 0 0; background: linear-gradient(rgba(139,148,172,0), rgba(139,148,172,.75)); }
.bloom { position: absolute; left: 336px; top: 1010px; width: 1190px; height: 12px; }
.desk-label { position: absolute; left: 1px; font-size: 14px; text-shadow: 0 1px 2px #000; }
.desk-a { top: 71px; }
.desk-b { top: 437px; left: 4px; }
.ic20 { width: 20px; height: 20px; }
.ch12 { width: 12px; height: 12px; }

/* File Explorer */
.explorer { position: absolute; left: 9px; top: 1px; width: 1902px; height: 1010px; display: flex; flex-direction: column; background: #191919; border-radius: 8px; overflow: hidden; box-shadow: 0 4px 14px rgba(0,0,0,.35); }
.ex-title { height: 50px; display: flex; background: #202020; }
.ex-tab { width: 300px; height: 39px; margin: 11px 0 0 11px; padding: 0 21px 0 12px; display: flex; align-items: center; background: #2c2c2c; border-radius: 8px 8px 0 0; }
.ex-tab svg { margin-bottom: 1px; }
.ex-tab b { margin-left: 12px; font-weight: 600; font-size: 14.5px; letter-spacing: -0.35px; }
.x12 { width: 12px; height: 12px; margin-left: auto; }
.ex-plus { width: 12px; height: 12px; margin: 25px 0 0 23px; }
.ex-ctl { display: flex; margin-left: auto; padding-right: 1px; }
.ex-ctl span { width: 58px; height: 36px; display: flex; align-items: center; justify-content: center; }
.ex-ctl svg { width: 12px; height: 12px; }
.ex-ctl .hot { background: #2d2d2d; }
.ex-nav { height: 60px; display: flex; align-items: center; background: #2c2c2c; border-bottom: 1px solid #3c3c3c; padding-left: 26px; }
.nav-i { width: 16px; height: 16px; margin-right: 44px; fill: none; stroke: #dedede; stroke-width: 1.2; }
.nav-i.dim { stroke: #6b6b6b; }
.address { width: 1153px; height: 40px; margin-left: -14px; padding-left: 17px; display: flex; align-items: center; background: #373737; border-radius: 5px; font-size: 17.5px; letter-spacing: -0.55px; }
.address .mon { fill: none; stroke: #c8c8c8; stroke-width: 1.5; margin-right: 22px; margin-top: -2px; }
.address span { margin: 0 21px 1px 21px; }
.ex-search { width: 473px; height: 41px; margin-left: 10px; padding: 0 17px 1px 18px; display: flex; align-items: center; justify-content: space-between; background: #373737; border-radius: 5px; font-size: 17.5px; letter-spacing: -0.6px; color: #cfcfcf; }
.ex-search svg { width: 14px; height: 14px; color: #fff; }
.ex-cmd { height: 68px; display: flex; align-items: center; border-bottom: 1px solid #3a3a3a; padding-left: 26px; }
.ex-cmd svg { width: 20px; height: 20px; fill: none; stroke: #c4c4c4; stroke-width: 1.4; }
.ex-cmd .bl { stroke: #45a9e0; fill: none; }
.ex-cmd span { width: 30px; }
.ex-cmd .c-new { margin-right: 11px; }
.ex-cmd .dn { width: 9px; height: 6px; margin-left: 6px; stroke: #aaa; }
.bar { width: 1px; height: 40px; background: #333; }
.ex-cmd .dn + .bar { margin: 0 22px 0 21px; }
.tools { display: flex; gap: 40px; margin-right: 24px; }
.ex-cmd .faint { stroke: #555; }
.ex-cmd .faint .bl { stroke: #24495e; }
.ex-cmd .c-sort { margin: 0 10px 0 18px; }
.ex-cmd .t-sort { width: 28px; }
.ex-cmd .c-view { margin: 0 9px 0 37px; }
.ex-cmd .t-view { width: 20px; }
.details { display: flex; align-items: center; gap: 10px; margin-left: auto; padding-right: 32px; }
.ex-cmd .details span { width: auto; }
.ex-body { flex: 1; min-height: 0; display: flex; }
.side { width: 304px; padding: 8px 1px 0 3px; border-right: 3px solid #252525; }
.side .row { height: 40px; display: flex; align-items: center; padding-right: 3px; gap: 5px; white-space: nowrap; }
.side .row > i { width: 35px; color: #6f6f6f; display: flex; justify-content: center; padding-left: 2px; }
.side .row > i.open { color: #c4c4c4; }
.side .open svg { transform: rotate(90deg); }
.side .sub { padding-left: 10px; }
.side .up { margin-top: -5px; }
.side .sel { background: #333; border-radius: 2px; }
.side .pin { width: 14px; height: 14px; margin-left: auto; }
.side hr { margin: 20px 10px 19px; border: 0; height: 1px; background: #3a3a3a; }
.files { flex: 1; display: flex; flex-direction: column; gap: 6px; }
.f-head { height: 30px; margin-bottom: 4px; display: flex; color: #dcdcdc; line-height: 33px; }
.f-name { position: relative; width: 341px; padding-left: 38px; border-right: 1px solid #5c5c5c; }
.f-head span { padding-left: 7px; }
.caret { position: absolute; left: 180px; top: 0; width: 10px; height: 6px; }
.f-row { width: 400px; height: 35px; margin-left: 19px; padding-left: 5px; display: grid; grid-template-columns: 20px 299px 20px; column-gap: 5px; align-items: center; }
.f-row svg { margin-top: -1px; }
.f-row em { font-style: normal; margin-left: -6px; color: #99a; }
.f-row.on { background: #333; }
.jsmark { font: bold 8.5px "Open Sans", sans-serif; fill: #b6b52b; letter-spacing: 0; }
.ex-status { height: 29px; display: flex; align-items: center; background: #1c1c1c; padding-left: 17px; color: #dedede; }
.ex-status span { width: 56px; white-space: nowrap; padding-bottom: 1px; }
.ex-status > i { width: 1px; height: 13px; margin: 0 13px 0 12px; background: #fff; }
.ex-status .s2 { width: 99px; }
.ex-status .s3 { width: 49px; margin-left: 10px; }
.ex-status .modes { margin-left: auto; display: flex; align-items: center; gap: 4px; padding-right: 9px; }
.modes svg { width: 20px; height: 20px; }
.ex-status .m-on { width: 28px; height: 29px; background: #666; border: 1px solid #8a8a8a; padding: 4px; }

/* Browser window */
.chrome { position: absolute; left: 664px; top: 28px; width: 629px; height: 992px; display: flex; flex-direction: column; background: #1f2120; border: 1px solid #474747; border-bottom: 0; border-radius: 8px 8px 0 0; box-shadow: 0 8px 36px rgba(0,0,0,.55); }
.strip { height: 49px; display: flex; align-items: center; padding-bottom: 1px; }
.drop { width: 35px; height: 34px; margin-left: 8px; display: flex; align-items: center; justify-content: center; background: #3a3b3b; border-radius: 11px; }
.drop svg { width: 12px; height: 12px; }
.tab { display: flex; align-items: center; color: #c7c7c7; white-space: nowrap; }
.t1 { margin-left: 17px; gap: 10px; }
.yahoo { width: 20px; height: 20px; background: #6001d2; font-weight: 800; font-size: 14px; line-height: 17px; text-align: center; color: #fff; }
.fade { overflow: hidden; -webkit-mask-image: linear-gradient(90deg, #000 55%, transparent); mask-image: linear-gradient(90deg, #000 55%, transparent); }
.w44 { width: 44px; } .w45 { width: 45px; } .w15 { width: 15px; }
.tdiv { width: 2px; height: 20px; margin: 0 13px; background: #474747; }
.t2 { gap: 10px; margin-left: -1px; }
.active { position: relative; width: 93px; height: 43px; margin: 7px 0 0 17px; padding: 0 15px 8px 11px; background: #3c3c3c; border-radius: 11px 11px 0 0; color: #e8e8e8; }
.active::before, .active::after { content: ""; position: absolute; bottom: 0; width: 13px; height: 13px; }
.active::before { left: -13px; background: radial-gradient(circle at 0 0, transparent 12.5px, #3c3c3c 13px); }
.active::after { right: -13px; background: radial-gradient(circle at 100% 0, transparent 12.5px, #3c3c3c 13px); }
.globe { width: 18px; height: 18px; margin-right: 10px; }
.tx { width: 10px; height: 10px; margin-left: auto; }
.plus { width: 14px; height: 14px; margin-left: 18px; }
.ctl { display: flex; gap: 43px; margin-left: auto; padding-right: 22px; }
.ctl svg { width: 14px; height: 14px; }
.tbar { height: 59px; display: flex; align-items: center; background: #3c3c3c; border-radius: 8px 8px 0 0; padding: 0 0 1px 20px; }
.tbar svg { fill: none; stroke: #c7c7c7; stroke-width: 1.7; }
.b { width: 16px; height: 16px; margin-right: 29px; }
.tbar .b:nth-child(2) { margin-right: 28px; }
.tbar .off { stroke: #7d7d7d; }
.omni { width: 251px; height: 42px; margin-left: -4px; padding-left: 7px; display: flex; align-items: center; background: #282828; border-radius: 21px; }
.chip { width: 62px; height: 30px; display: flex; align-items: center; gap: 6px; padding-left: 5px; border-radius: 15px; background: #3c3c3c; font-weight: 600; font-size: 14px; letter-spacing: -0.3px; }
.chip svg { width: 18px; height: 18px; }
.url { width: 102px; flex: none; padding-left: 11px; font-size: 17px; letter-spacing: -0.3px; }
.o1 { width: 18px; height: 18px; }
.o2 { width: 21px; height: 21px; margin-left: 21px; }
.ext { width: 22px; height: 22px; margin-left: 23px; }
.vdiv { width: 2px; height: 20px; margin-left: 20px; background: #5a5a5a; }
.error { width: 92px; height: 42px; margin-left: 12px; padding: 0 0 1px 11px; display: flex; align-items: center; gap: 7px; background: #8c1d18; border: 1px solid #b09390; border-radius: 21px; font-size: 14.5px; }
.error b { width: 25px; height: 25px; background: #bf360c; border-radius: 50%; text-align: center; font-weight: 400; line-height: 25px; }
.dots { width: 4px; height: 18px; margin-left: 26px; }
.tbar .dots { stroke: none; }
.view { flex: 1; min-height: 0; display: flex; }
.page { flex: 1; background: #fff; color: #000; font-family: "Liberation Serif", serif; letter-spacing: 0; }
.banner { height: 51px; display: flex; align-items: center; justify-content: center; gap: 2px; padding: 0 0 4px 2px; }
.ava { width: 44px; height: 44px; }
h1 { font-size: 22.5px; line-height: 26px; color: #008000; white-space: nowrap; padding-top: 2px; }
.dark { height: 809px; padding: 66px 50px 0; background: #000; }
.card { height: 677px; padding: 19px 22px 0 19px; background: #fff; border-radius: 8px; display: flex; flex-direction: column; }
.card .ava { align-self: center; margin-left: 2px; }
h2 { margin: 6px 0 15px 3px; font-size: 22.5px; line-height: 26px; text-align: center; white-space: nowrap; }
.card label { height: 26px; line-height: 17px; font-size: 15px; padding-top: 4px; }
.in { height: 35px; margin-bottom: 10px; border: 1px solid #ccc; border-radius: 4px; background: #fff; display: flex; align-items: center; justify-content: space-between; }
.h34 { height: 34px; }
.card label.tight { height: 25px; }
.date { height: 37px; padding: 0 12px 0 11px; font: 12.1px "Liberation Mono", monospace; }
.date svg { width: 12px; height: 14px; margin-bottom: 2px; }
.pick { margin-right: 2px; padding: 0 6px 2px 12px; font: 13px "Liberation Sans", sans-serif; letter-spacing: -0.2px; }
.pick svg { width: 12px; height: 8px; margin-top: 2px; }
.go { height: 34px; margin: 4px 11px 0 10px; background: #29fb29; border: 1px solid #c4c4c4; border-radius: 3px; font: 13px/32px "Liberation Sans", sans-serif; letter-spacing: -0.2px; text-align: center; }
.scroll { width: 20px; padding: 9px 1px 10px 2px; background: #f1f1f1; display: flex; flex-direction: column; align-items: center; gap: 7px; }
.scroll svg { width: 10px; height: 5px; }
.scroll i { flex: 1; align-self: stretch; background: #c1c1c1; }

/* Taskbar */
.taskbar { position: absolute; left: 0; top: 1020px; width: 1920px; height: 60px; display: flex; align-items: center; border-top: 1px solid #46505a; background: linear-gradient(90deg, #1d2b35 0, #1f2a32 330px, #13264a 390px, #14274d 680px, #1a2942 820px, #1f2737 1000px, #1b2642 1130px, #152449 1300px, #1a2544 1500px, #1e2a35 1580px, #1e2a33 1920px); }
.weather { width: 433px; display: flex; align-items: center; gap: 9px; padding-left: 25px; line-height: 20px; letter-spacing: -0.2px; }
.weather svg { width: 30px; height: 26px; }
.weather p { position: relative; top: -1.5px; }
.weather .deg { letter-spacing: -0.7px; }
.gr { color: #cdd3d7; }
.start { width: 29px; height: 29px; }
.pill { width: 275px; height: 40px; margin-left: 17px; padding: 0 0 1px 14px; display: flex; align-items: center; gap: 14px; border: 1px solid #475574; border-radius: 20px; background: linear-gradient(90deg, #2d3b57, #33426c 60%, #36406a); font-size: 17px; color: #d5dae4; }
.pill svg { width: 18px; height: 18px; }
.apps { display: flex; gap: 5px; margin-left: 5px; }
.app { position: relative; width: 50px; height: 50px; display: flex; align-items: center; justify-content: center; }
.app > svg { width: 30px; height: 30px; }
.run::after, .live::after { content: ""; position: absolute; bottom: 1px; left: 21px; width: 8px; height: 4px; border-radius: 2px; background: #9aa0a8; }
.live { background: rgba(255,255,255,.08); border: 1px solid rgba(255,255,255,.08); border-radius: 5px; }
.live::after { left: 15px; width: 20px; bottom: 0; background: #4cc2ff; }
.pre { position: absolute; left: 17px; top: 30px; width: 23px; height: 10px; background: #fdc60a; color: #111; border-radius: 2px; font-size: 10px; font-weight: 700; line-height: 10px; text-align: center; letter-spacing: -0.2px; }
.badge { position: absolute; left: 26px; top: 2px; width: 26px; height: 22px; border-radius: 11px; background: #4cc2ff; color: #000; line-height: 22px; font-size: 15px; text-align: center; }
.ab { position: absolute; left: 25px; top: 3px; width: 20px; height: 20px; border-radius: 50%; background: #bf360c; font-size: 11px; line-height: 20px; text-align: center; }
.tray { display: flex; align-items: center; margin-left: 87px; line-height: 20px; }
.lang p, .clock p { position: relative; top: -1px; }
.y1 { width: 14px; height: 8px; }
.y2 { width: 20px; height: 20px; margin-left: 23px; }
.lang { width: 40px; margin: 0 17px 0 18px; text-align: center; }
.y3 { width: 20px; height: 16px; }
.y4 { width: 20px; height: 18px; margin-left: 10px; }
.y5 { width: 20px; height: 18px; margin-left: 10px; }
.clock { width: 98px; text-align: right; }
.clock .day { letter-spacing: 0; }
.y6 { width: 16px; height: 20px; margin-left: 11px; }
```
